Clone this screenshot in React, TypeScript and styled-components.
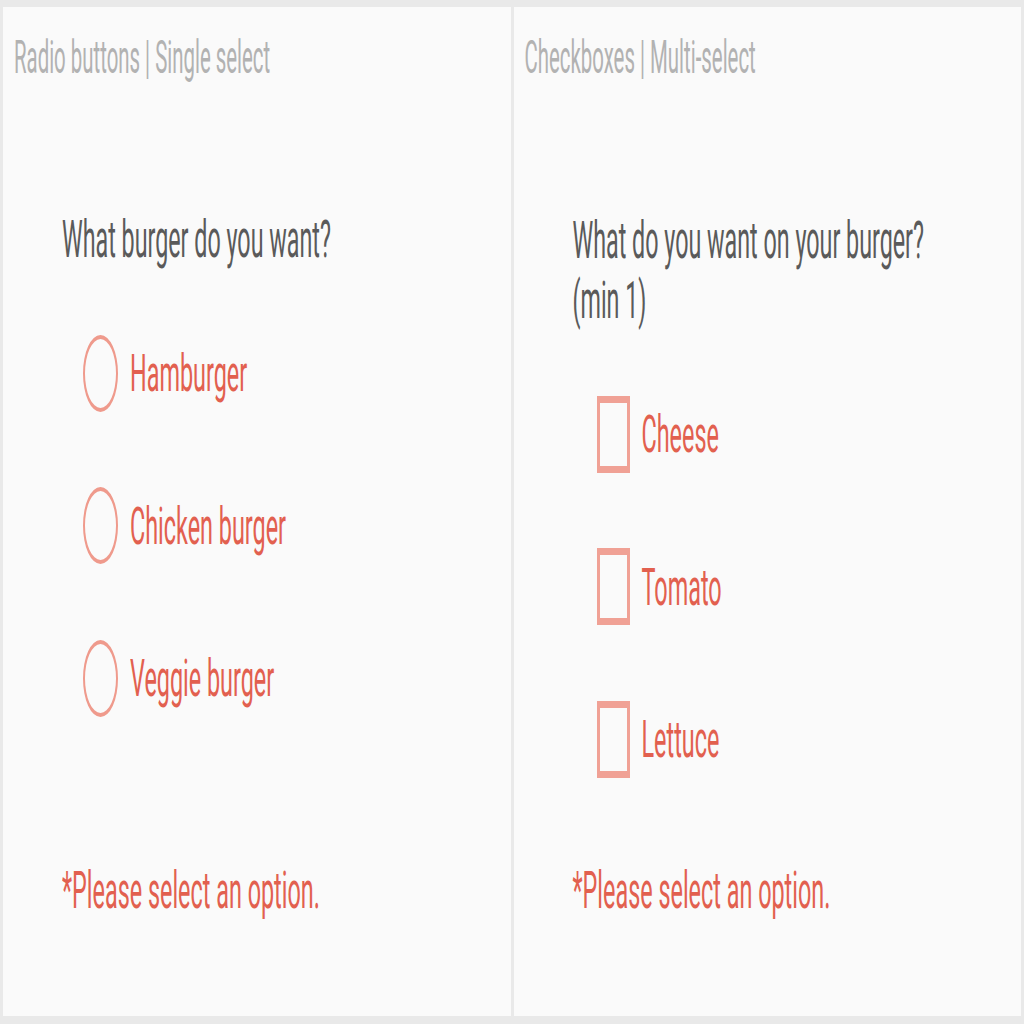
import React from "react";
import styled, { createGlobalStyle } from "styled-components";

/* The reference is a vertically stretched rendering: every glyph is
   drawn 2.25x taller than it is wide. */
const STRETCH = 2.25;

const GlobalStyle = createGlobalStyle`
  html, body {
    margin: 0;
    padding: 0;
    background: #e9e9e9;
    font-family: Roboto, "Liberation Sans", Arial, sans-serif;
  }
`;

const Stage = styled.div`
  width: 1024px;
  height: 1024px;
  box-sizing: border-box;
  padding: 7px 3px 8px 3px;
  background: #e9e9e9;
  display: grid;
  grid-template-columns: 1fr 1fr;
  gap: 3px;
`;

const Panel = styled.section`
  background: #fafafa;
  display: flex;
  flex-direction: column;
  padding: 25px 11px 94px 11px;
  box-sizing: border-box;
  min-height: 0;
`;

const Stretched = styled.span<{ $lh: number }>`
  display: inline-block;
  line-height: ${(p) => p.$lh}px;
  transform: scaleY(${STRETCH});
  transform-origin: center;
  white-space: nowrap;
`;

const Title = styled.h2`
  margin: 0;
  height: 50px;
  display: flex;
  align-items: center;
  font-size: 20.4px;
  font-weight: 400;
  color: #b2b2b2;
`;

const Body = styled.div`
  flex: 1;
  display: flex;
  flex-direction: column;
  padding-left: 48px;
  margin-top: 128px;
`;

const Question = styled.p<{ $lines: number }>`
  margin: 0;
  height: ${(p) => p.$lines * 27 * STRETCH}px;
  display: flex;
  align-items: center;
  font-size: 23.3px;
  font-weight: 400;
  color: #5a5a5a;
`;

const Options = styled.div`
  display: flex;
  flex-direction: column;
  gap: 75.5px;
  margin-top: 64px;
  padding-left: 21px;
`;

const OptionRow = styled.label`
  display: flex;
  align-items: center;
  gap: 12px;
  height: 77px;
  cursor: pointer;
`;

const Radio = styled.span`
  width: 35px;
  height: 77px;
  box-sizing: border-box;
  border-style: solid;
  border-color: #ef9a8c;
  border-width: 4.5px 2px;
  border-radius: 50%;
  flex: none;
`;

const Checkbox = styled.span`
  width: 33px;
  height: 77px;
  box-sizing: border-box;
  border-style: solid;
  border-color: #f0a195;
  border-width: 7px 3px;
  flex: none;
  margin-left: 3px;
`;

const OptionLabel = styled.span`
  font-size: 23.4px;
  color: #e2604f;
`;

const ErrorText = styled.p`
  margin: auto 0 0 0;
  height: 61px;
  display: flex;
  align-items: center;
  font-size: 23.4px;
  color: #e2604f;
`;

const radioOptions = ["Hamburger", "Chicken burger", "Veggie burger"];
const checkOptions = ["Cheese", "Tomato", "Lettuce"];

export default function App() {
  return (
    <>
      <GlobalStyle />
      <Stage>
        <Panel>
          <Title>
            <Stretched $lh={22}>Radio buttons | Single select</Stretched>
          </Title>
          <Body>
            <Question $lines={1}>
              <Stretched $lh={27}>What burger do you want?</Stretched>
            </Question>
            <Options>
              {radioOptions.map((o) => (
                <OptionRow key={o}>
                  <Radio />
                  <OptionLabel>
                    <Stretched $lh={28}>{o}</Stretched>
                  </OptionLabel>
                </OptionRow>
              ))}
            </Options>
            <ErrorText>
              <Stretched $lh={27}>*Please select an option.</Stretched>
            </ErrorText>
          </Body>
        </Panel>
        <Panel>
          <Title>
            <Stretched $lh={22}>Checkboxes | Multi-select</Stretched>
          </Title>
          <Body>
            <Question $lines={2}>
              <Stretched $lh={27}>
                What do you want on your burger?
                <br />
                (min 1)
              </Stretched>
            </Question>
            <Options>
              {checkOptions.map((o) => (
                <OptionRow key={o}>
                  <Checkbox />
                  <OptionLabel>
                    <Stretched $lh={28}>{o}</Stretched>
                  </OptionLabel>
                </OptionRow>
              ))}
            </Options>
            <ErrorText>
              <Stretched $lh={27}>*Please select an option.</Stretched>
            </ErrorText>
          </Body>
        </Panel>
      </Stage>
    </>
  );
}
